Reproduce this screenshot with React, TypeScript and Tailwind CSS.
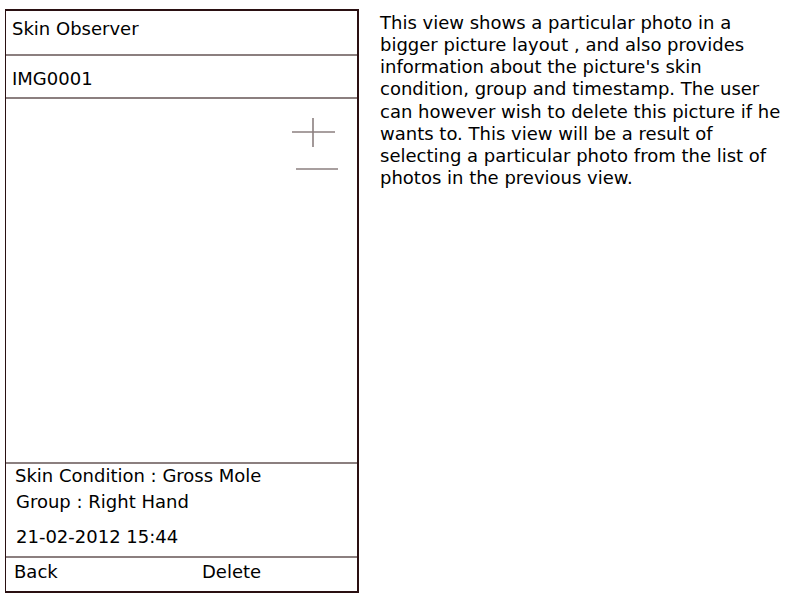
const DESCRIPTION = [
  'This view shows a particular photo in a',
  'bigger picture layout , and also provides',
  "information about the picture's skin",
  'condition, group and timestamp. The user',
  'can however wish to delete this picture if he',
  'wants to. This view will be a result of',
  'selecting a particular photo from the list of',
  'photos in the previous view.',
];

function Divider() {
  return <div className="h-[2px] shrink-0 bg-[#8b7f7f]" />;
}

function ZoomControls() {
  return (
    <svg
      className="absolute left-[284px] top-[17px]"
      width="50"
      height="58"
      viewBox="0 0 50 58"
      fill="none"
      stroke="#8b7f7f"
      strokeWidth="1.6"
    >
      <line x1="2" y1="16" x2="45" y2="16" />
      <line x1="23" y1="2" x2="23" y2="31" />
      <line x1="6" y1="53" x2="48" y2="53" />
    </svg>
  );
}

function PhoneMockup() {
  return (
    <div className="ml-[5px] mt-[9px] flex h-[584px] w-[354px] shrink-0 flex-col border-t-2 border-r-2 border-b-2 border-l border-[#2a1012] bg-white">
      <div className="h-[43px] shrink-0 pl-[6px] pt-[7px]">Skin Observer</div>
      <Divider />
      <div className="h-[41px] shrink-0 pl-[6px] pt-[12px]">IMG0001</div>
      <Divider />
      <div className="relative flex-1">
        <ZoomControls />
      </div>
      <Divider />
      <div className="h-[92px] shrink-0 pt-[1px]">
        <div className="pl-[9px]">Skin Condition : Gross Mole</div>
        <div className="mt-[4px] pl-[10px]">Group : Right Hand</div>
        <div className="mt-[13px] pl-[10px]">21-02-2012 15:44</div>
      </div>
      <Divider />
      <div className="flex h-[33px] shrink-0 pt-[3px]">
        <span className="w-[196px] pl-[8px]">Back</span>
        <span>Delete</span>
      </div>
    </div>
  );
}

export default function App() {
  return (
    <div className="flex h-[600px] w-[800px] bg-white font-['DejaVu_Sans',sans-serif] text-[18px] leading-[22px] text-black">
      <PhoneMockup />
      <div className="ml-[21px] mt-[12px] leading-[22.15px]">
        {DESCRIPTION.map((line, i) => (
          <div key={i} className="whitespace-nowrap">{line}</div>
        ))}
      </div>
    </div>
  );
}
